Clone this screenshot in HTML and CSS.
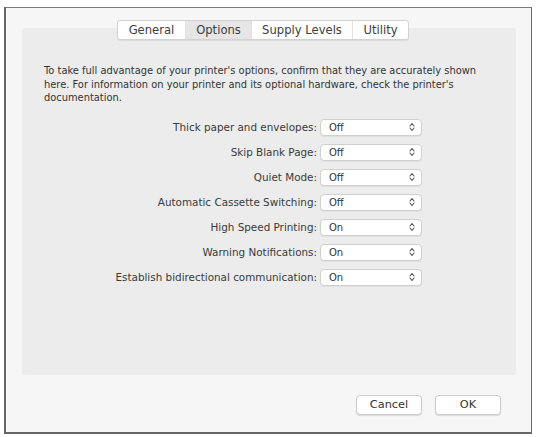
FILE: index.html
```html
<!DOCTYPE html>
<html>
<head>
<meta charset="utf-8">
<link rel="stylesheet" href="styles.css">
</head>
<body>
<div class="window">
  <div class="tabs">
    <div class="tab t-general">General</div>
    <div class="tab t-options selected">Options</div>
    <div class="tab t-supply">Supply Levels</div>
    <div class="tab t-utility">Utility</div>
  </div>
  <div class="panel">
    <p class="intro">To take full advantage of your printer's options, confirm that they are accurately shown here. For information on your printer and its optional hardware, check the printer's<br>documentation.</p>
    <div class="rows">
      <div class="label">Thick paper and envelopes:</div>
      <div class="select"><span>Off</span><svg class="arrows" viewBox="0 0 6 10" width="6" height="10"><path d="M1 4 L3 1.5 L5 4 M1 6 L3 8.5 L5 6" fill="none" stroke="#555" stroke-width="1.1" stroke-linecap="round" stroke-linejoin="round"/></svg></div>
      <div class="label">Skip Blank Page:</div>
      <div class="select"><span>Off</span><svg class="arrows" viewBox="0 0 6 10" width="6" height="10"><path d="M1 4 L3 1.5 L5 4 M1 6 L3 8.5 L5 6" fill="none" stroke="#555" stroke-width="1.1" stroke-linecap="round" stroke-linejoin="round"/></svg></div>
      <div class="label">Quiet Mode:</div>
      <div class="select"><span>Off</span><svg class="arrows" viewBox="0 0 6 10" width="6" height="10"><path d="M1 4 L3 1.5 L5 4 M1 6 L3 8.5 L5 6" fill="none" stroke="#555" stroke-width="1.1" stroke-linecap="round" stroke-linejoin="round"/></svg></div>
      <div class="label">Automatic Cassette Switching:</div>
      <div class="select"><span>Off</span><svg class="arrows" viewBox="0 0 6 10" width="6" height="10"><path d="M1 4 L3 1.5 L5 4 M1 6 L3 8.5 L5 6" fill="none" stroke="#555" stroke-width="1.1" stroke-linecap="round" stroke-linejoin="round"/></svg></div>
      <div class="label">High Speed Printing:</div>
      <div class="select"><span>On</span><svg class="arrows" viewBox="0 0 6 10" width="6" height="10"><path d="M1 4 L3 1.5 L5 4 M1 6 L3 8.5 L5 6" fill="none" stroke="#555" stroke-width="1.1" stroke-linecap="round" stroke-linejoin="round"/></svg></div>
      <div class="label">Warning Notifications:</div>
      <div class="select"><span>On</span><svg class="arrows" viewBox="0 0 6 10" width="6" height="10"><path d="M1 4 L3 1.5 L5 4 M1 6 L3 8.5 L5 6" fill="none" stroke="#555" stroke-width="1.1" stroke-linecap="round" stroke-linejoin="round"/></svg></div>
      <div class="label">Establish bidirectional communication:</div>
      <div class="select"><span>On</span><svg class="arrows" viewBox="0 0 6 10" width="6" height="10"><path d="M1 4 L3 1.5 L5 4 M1 6 L3 8.5 L5 6" fill="none" stroke="#555" stroke-width="1.1" stroke-linecap="round" stroke-linejoin="round"/></svg></div>
    </div>
  </div>
  <div class="buttons">
    <div class="button">Cancel</div>
    <div class="button">OK</div>
  </div>
</div>
</body>
</html>
```

FILE: styles.css
```css
html, body {
  margin: 0;
  padding: 0;
  background: #ffffff;
}
body {
  font-family: "DejaVu Sans", Verdana, sans-serif;
  color: #3a3a3a;
}
.window {
  box-sizing: border-box;
  width: 528px;
  height: 427px;
  margin: 7px 0 0 4px;
  background: #f6f6f6;
  border: 2px solid #666666;
  border-top: 1px solid #7a7a7a;
  border-right: 1px solid #6a6a6a;
  padding-top: 12px;
  display: flex;
  flex-direction: column;
}
.tabs {
  align-self: flex-start;
  margin-left: 111px;
  margin-bottom: -12px;
  position: relative;
  z-index: 1;
  display: flex;
  height: 20px;
  box-sizing: border-box;
  background: #ffffff;
  border: 1px solid #d2d2d2;
  border-radius: 3px;
  box-shadow: 0 1px 1px rgba(0,0,0,0.08);
}
.tab {
  font-size: 11.6px;
  line-height: 18px;
  text-align: center;
  color: #3d3d3d;
  border-right: 1px solid #e2e2e2;
}
.tab:last-child {
  border-right: none;
}
.t-general { width: 67px; }
.t-options { width: 65px; }
.t-supply { width: 100px; }
.t-utility { width: 55px; }
.tab.selected {
  background: #e6e6e6;
}
.panel {
  margin: 0 15px 0 16px;
  height: 347px;
  box-sizing: border-box;
  background: #ececec;
  border-radius: 3px;
  padding: 36px 20px 0 22px;
}
.intro {
  margin: 0;
  font-size: 9.9px;
  line-height: 13.5px;
  color: #333333;
}
.rows {
  margin-top: 14px;
  display: grid;
  grid-template-columns: 273px 102px;
  column-gap: 3px;
  row-gap: 8px;
  align-items: center;
}
.label {
  text-align: right;
  font-size: 10.4px;
  color: #3a3a3a;
}
.select {
  box-sizing: border-box;
  height: 17px;
  background: #ffffff;
  border: 1px solid #d0d0d0;
  border-radius: 4px;
  box-shadow: 0 1px 0 rgba(0,0,0,0.05);
  display: flex;
  align-items: center;
  justify-content: space-between;
  padding: 0 6px 0 8px;
  font-size: 10px;
  color: #333333;
}
.arrows {
  display: block;
}
.buttons {
  display: flex;
  justify-content: flex-end;
  gap: 13px;
  padding: 20px 30px 0 0;
}
.button {
  box-sizing: border-box;
  width: 66px;
  height: 20px;
  background: #ffffff;
  border: 1px solid #cccccc;
  border-radius: 4px;
  box-shadow: 0 1px 1px rgba(0,0,0,0.12);
  font-size: 11.3px;
  line-height: 18px;
  text-align: center;
  color: #333333;
}
```
